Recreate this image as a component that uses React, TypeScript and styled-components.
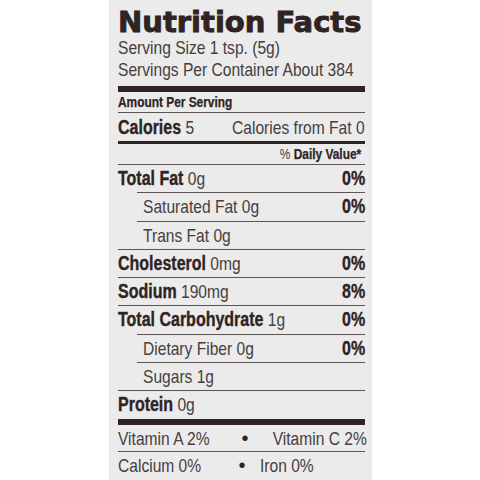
import React from "react";
import styled, { createGlobalStyle } from "styled-components";

const Global = createGlobalStyle`
  html, body { margin: 0; padding: 0; background: #ffffff; }
  body { width: 480px; height: 480px; overflow: hidden; }
`;

const INK = "#2f2323";
const SOFT = "#463e3e";

const Page = styled.div`
  display: flex;
  width: 480px;
  height: 480px;
  padding-left: 109px;
  box-sizing: border-box;
`;

const Panel = styled.section`
  width: 263px;
  height: 480px;
  box-sizing: border-box;
  padding: 0 7px 0 9px;
  background: #ebebeb;
  display: flex;
  flex-direction: column;
  font-family: "Liberation Sans", Arial, sans-serif;
  color: ${SOFT};
`;

/* condensed face emulated: Arial metrics squeezed to Arial Narrow width */
const Cond = styled.span<{ $origin?: "left" | "right" }>`
  display: inline-block;
  white-space: nowrap;
  min-width: 0;
  flex-shrink: ${(p) => (p.$origin === "right" ? 0 : 1)};
  transform: scaleX(0.82);
  transform-origin: ${(p) => p.$origin ?? "left"} center;
`;

const Title = styled.h1`
  margin: 7px 0 0;
  font-family: "DejaVu Sans", sans-serif;
  font-weight: 700;
  font-size: 29px;
  line-height: 30px;
  color: ${INK};
  -webkit-text-stroke: 0.9px ${INK};
  white-space: nowrap;
`;

const Serving = styled.div`
  font-size: 19px;
  line-height: 22px;
  white-space: nowrap;
`;

const Bar = styled.div<{ $h: number; $mt?: number }>`
  height: ${(p) => p.$h}px;
  margin-top: ${(p) => p.$mt ?? 0}px;
  background: ${INK};
  flex-shrink: 0;
`;

const Rule = styled.div<{ $indent?: boolean }>`
  height: 1px;
  margin-left: ${(p) => (p.$indent ? 19 : 0)}px;
  background: #5d5353;
  flex-shrink: 0;
`;

const SmallRow = styled.div<{ $right?: boolean }>`
  display: flex;
  justify-content: ${(p) => (p.$right ? "flex-end" : "flex-start")};
  height: 20px;
  line-height: 20px;
  font-size: 14.5px;
  white-space: nowrap;
  padding-right: ${(p) => (p.$right ? 4 : 0)}px;
  flex-shrink: 0;
`;

const SmallBold = styled.span`
  font-weight: 700;
  color: ${INK};
  -webkit-text-stroke: 0.25px ${INK};
`;

const Row = styled.div<{ $indent?: boolean; $h?: number; $pt?: number }>`
  display: flex;
  justify-content: space-between;
  align-items: baseline;
  gap: 6px;
  height: ${(p) => p.$h ?? 27.25}px;
  box-sizing: border-box;
  padding-top: ${(p) => p.$pt ?? 0}px;
  padding-left: ${(p) => (p.$indent ? 25 : 0)}px;
  line-height: 27px;
  font-size: 19px;
  white-space: nowrap;
  flex-shrink: 0;
`;

const Label = styled.span`
  font-weight: 700;
  font-size: 19.5px;
  color: ${INK};
  -webkit-text-stroke: 0.35px ${INK};
`;

const Pct = styled(Label)``;

const VitRow = styled.div<{ $h: number }>`
  display: flex;
  align-items: baseline;
  height: ${(p) => p.$h}px;
  line-height: 26px;
  font-size: 19px;
  white-space: nowrap;
  flex-shrink: 0;
`;

const VitLeft = styled.span<{ $w: number }>`
  width: ${(p) => p.$w}px;
  flex-shrink: 0;
`;

const Bullet = styled.span`
  width: 14px;
  text-align: center;
  flex-shrink: 0;
  color: ${INK};
  font-size: 20px;
`;

const VitRight = styled.span<{ $right?: boolean; $ml?: number }>`
  flex: 1;
  text-align: ${(p) => (p.$right ? "right" : "left")};
  margin-left: ${(p) => p.$ml ?? 0}px;
  padding-right: ${(p) => (p.$right ? 2 : 0)}px;
`;

type Nutrient = {
  label: string;
  amount: string;
  pct?: string;
  bold?: boolean;
  indent?: boolean;
  ruleIndent?: boolean;
};

const nutrients: Nutrient[] = [
  { label: "Total Fat", amount: "0g", pct: "0%", bold: true, ruleIndent: true },
  { label: "Saturated Fat", amount: "0g", pct: "0%", indent: true, ruleIndent: true },
  { label: "Trans Fat", amount: "0g", indent: true },
  { label: "Cholesterol", amount: "0mg", pct: "0%", bold: true },
  { label: "Sodium", amount: "190mg", pct: "8%", bold: true },
  { label: "Total Carbohydrate", amount: "1g", pct: "0%", bold: true, ruleIndent: true },
  { label: "Dietary Fiber", amount: "0g", pct: "0%", indent: true, ruleIndent: true },
  { label: "Sugars", amount: "1g", indent: true },
];

export default function App() {
  return (
    <>
      <Global />
      <Page>
        <Panel>
          <Title>Nutrition Facts</Title>
          <Serving>
            <Cond>Serving Size 1 tsp. (5g)</Cond>
          </Serving>
          <Serving>
            <Cond>Servings Per Container About 384</Cond>
          </Serving>
          <Bar $h={6} $mt={5} />
          <SmallRow>
            <Cond>
              <SmallBold>Amount Per Serving</SmallBold>
            </Cond>
          </SmallRow>
          <Rule />
          <Row $h={28} $pt={1}>
            <Cond>
              <Label>Calories</Label> 5
            </Cond>
            <Cond $origin="right">Calories from Fat 0</Cond>
          </Row>
          <Bar $h={3} />
          <SmallRow $right>
            <Cond $origin="right">
              %&nbsp;<SmallBold>Daily Value*</SmallBold>
            </Cond>
          </SmallRow>
          <Rule />
          {nutrients.map((n) => (
            <React.Fragment key={n.label}>
              <Row $indent={n.indent}>
                <Cond>
                  {n.bold ? <Label>{n.label}</Label> : n.label} {n.amount}
                </Cond>
                {n.pct && (
                  <Cond $origin="right">
                    <Pct>{n.pct}</Pct>
                  </Cond>
                )}
              </Row>
              <Rule $indent={n.ruleIndent} />
            </React.Fragment>
          ))}
          <Row $h={28}>
            <Cond>
              <Label>Protein</Label> 0g
            </Cond>
          </Row>
          <Bar $h={6} />
          <VitRow $h={26}>
            <VitLeft $w={120}>
              <Cond>Vitamin A 2%</Cond>
            </VitLeft>
            <Bullet>•</Bullet>
            <VitRight $right>
              <Cond $origin="right">Vitamin C 2%</Cond>
            </VitRight>
          </VitRow>
          <Rule />
          <VitRow $h={27}>
            <VitLeft $w={117}>
              <Cond>Calcium 0%</Cond>
            </VitLeft>
            <Bullet>•</Bullet>
            <VitRight $ml={11}>
              <Cond>Iron 0%</Cond>
            </VitRight>
          </VitRow>
        </Panel>
      </Page>
    </>
  );
}
